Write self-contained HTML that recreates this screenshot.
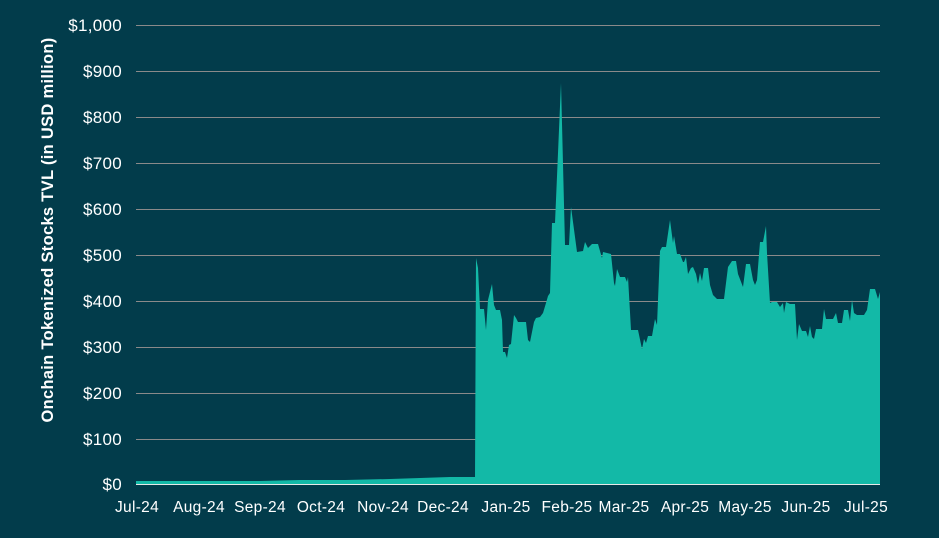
<!DOCTYPE html>
<html><head><meta charset="utf-8"><style>
html,body{margin:0;padding:0;background:#023c4b;}
body{width:939px;height:533px;overflow:hidden;}
svg text{font-family:"Liberation Sans",sans-serif;fill:#fff;}
</style></head><body>
<svg width="939" height="533" viewBox="0 0 939 533" xmlns="http://www.w3.org/2000/svg">
<rect width="939" height="533" fill="#023c4b"/>
<g stroke="#8a8a8a" stroke-width="1">
<line x1="136" y1="25.5" x2="880" y2="25.5"/>
<line x1="136" y1="71.5" x2="880" y2="71.5"/>
<line x1="136" y1="117.5" x2="880" y2="117.5"/>
<line x1="136" y1="163.5" x2="880" y2="163.5"/>
<line x1="136" y1="209.5" x2="880" y2="209.5"/>
<line x1="136" y1="255.5" x2="880" y2="255.5"/>
<line x1="136" y1="301.5" x2="880" y2="301.5"/>
<line x1="136" y1="347.5" x2="880" y2="347.5"/>
<line x1="136" y1="393.5" x2="880" y2="393.5"/>
<line x1="136" y1="439.5" x2="880" y2="439.5"/>
</g>
<path fill="#13b9a7" d="M136,484 L136,481 L200,481 L260,481 L300,480 L345,480 L390,479 L420,478 L450,477 L475,477 L476,258 L478,268 L480,309 L484,309 L486,330 L488,300 L492,284 L494,305 L496,310 L500,310 L502,320 L503,352 L505,352 L507,358 L509,345 L511,344 L514,315 L516,318 L518,322 L526,322 L528,340 L530,342 L534,322 L536,318 L540,317 L543,313 L546,303 L548,296 L550,293 L552,223 L555,223 L561,83 L565,245 L569,245 L571,207 L577,252 L583,251 L585,242 L588,248 L592,244 L598,244 L602,258 L603,252 L611,254 L614,283 L615,286 L617,269 L620,277 L625,277 L627,282 L628,277 L631,330 L638,330 L642,349 L644,339 L646,343 L648,336 L652,336 L655,319 L657,325 L660,251 L662,247 L666,247 L670,220 L673,243 L674,236 L677,254 L680,254 L683,262 L684,262 L686,257 L688,274 L691,268 L693,267 L696,274 L698,284 L700,273 L702,281 L704,268 L708,268 L710,285 L713,295 L717,299 L724,299 L728,267 L732,261 L736,261 L738,274 L743,287 L746,264 L750,264 L753,280 L755,285 L757,280 L760,242 L763,242 L766,226 L767,253 L770,303 L772,302 L777,302 L780,307 L783,303 L784,313 L786,302 L790,304 L795,304 L797,340 L799,324 L802,331 L806,331 L808,337 L810,326 L812,337 L814,339 L816,329 L822,329 L824,309 L826,319 L833,319 L836,313 L838,323 L842,323 L844,310 L848,310 L850,321 L852,300 L854,313 L857,315 L864,315 L867,310 L870,289 L875,289 L878,299 L880,292 L880,484 Z"/>
<line x1="136" y1="484.5" x2="880" y2="484.5" stroke="#e8e8e8" stroke-width="1"/>
<g font-size="17" text-anchor="end" letter-spacing="0.3">
<text x="122" y="31">$1,000</text>
<text x="122" y="77">$900</text>
<text x="122" y="123">$800</text>
<text x="122" y="169">$700</text>
<text x="122" y="215">$600</text>
<text x="122" y="261">$500</text>
<text x="122" y="307">$400</text>
<text x="122" y="353">$300</text>
<text x="122" y="399">$200</text>
<text x="122" y="445">$100</text>
<text x="122" y="490">$0</text>
</g>
<g font-size="15.5" text-anchor="middle" letter-spacing="0.3">
<text x="137" y="512">Jul-24</text>
<text x="199" y="512">Aug-24</text>
<text x="260" y="512">Sep-24</text>
<text x="321" y="512">Oct-24</text>
<text x="383" y="512">Nov-24</text>
<text x="443" y="512">Dec-24</text>
<text x="506" y="512">Jan-25</text>
<text x="567" y="512">Feb-25</text>
<text x="624" y="512">Mar-25</text>
<text x="685" y="512">Apr-25</text>
<text x="745" y="512">May-25</text>
<text x="806" y="512">Jun-25</text>
<text x="866" y="512">Jul-25</text>
</g>
<text x="0" y="0" font-size="16.5" font-weight="bold" text-anchor="middle" letter-spacing="0.3" transform="translate(53,230) rotate(-90)">Onchain Tokenized Stocks TVL (in USD million)</text>
</svg>
</body></html>
